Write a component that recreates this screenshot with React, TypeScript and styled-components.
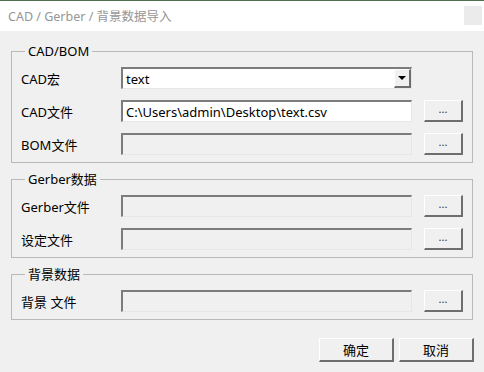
import * as React from 'react'
import styled, { createGlobalStyle } from 'styled-components'

const GlobalStyle = createGlobalStyle({
  'html, body': {
    margin: 0,
    padding: 0,
    background: '#f0f0f0'
  },
  body: {
    fontFamily: '"Noto Sans", "Noto Sans CJK SC", sans-serif',
    fontSize: '13px',
    color: '#000'
  }
})

const Window = styled.div({
  width: '484px',
  height: '372px',
  background: '#f0f0f0',
  borderTop: '1px solid #4f6f52',
  boxSizing: 'border-box',
  overflow: 'hidden'
})

const TitleBar = styled.div({
  height: '30px',
  background: '#ffffff',
  display: 'flex',
  alignItems: 'center',
  justifyContent: 'space-between',
  padding: '0 2px 0 8px'
})

const Title = styled.span({
  fontSize: '12.5px',
  color: '#969696',
  marginTop: '-2px'
})

const CloseBox = styled.div({
  width: '18px',
  height: '19px',
  background: '#ebebeb',
  marginTop: '-2px'
})

const Body = styled.div({
  padding: '12px 11px 0 11px',
  display: 'flex',
  flexDirection: 'column',
  gap: '8px'
})

const Group = styled.fieldset({
  margin: 0,
  padding: '8px 9px 7px 9px',
  border: '1px solid #b9b9b9',
  display: 'flex',
  flexDirection: 'column',
  gap: '11px',
  minWidth: 0
})

const Legend = styled.legend({
  padding: '0 3px',
  marginLeft: '4px',
  lineHeight: '16px',
  fontSize: '13px'
})

const Row = styled.div({
  display: 'flex',
  alignItems: 'center',
  height: '22px'
})

const Label = styled.span({
  width: '100px',
  flexShrink: 0
})

const Field = styled.div<{ $enabled?: boolean }>(({ $enabled }) => ({
  width: '291px',
  height: '22px',
  boxSizing: 'border-box',
  background: $enabled ? '#ffffff' : '#f0f0f0',
  borderTop: '2px solid #7c7c7c',
  borderLeft: '2px solid #7c7c7c',
  borderBottom: '1px solid #e6e6e6',
  borderRight: '1px solid #e6e6e6',
  display: 'flex',
  alignItems: 'center',
  padding: '0 3px',
  whiteSpace: 'nowrap',
  overflow: 'hidden'
}))

const Select = styled(Field)({
  padding: '0 0 0 3px',
  justifyContent: 'space-between'
})

const DropButton = styled.div({
  width: '17px',
  height: '19px',
  boxSizing: 'border-box',
  background: '#f0f0f0',
  borderTop: '1px solid #ffffff',
  borderLeft: '1px solid #ffffff',
  borderRight: '2px solid #6e6e6e',
  borderBottom: '2px solid #6e6e6e',
  display: 'flex',
  alignItems: 'center',
  justifyContent: 'center',
  alignSelf: 'flex-start'
})

const Arrow = styled.span({
  width: 0,
  height: 0,
  borderLeft: '4px solid transparent',
  borderRight: '4px solid transparent',
  borderTop: '4px solid #000'
})

const Browse = styled.button({
  marginLeft: '12px',
  width: '39px',
  height: '22px',
  boxSizing: 'border-box',
  background: '#f0f0f0',
  borderTop: '1px solid #ffffff',
  borderLeft: '1px solid #ffffff',
  borderRight: '2px solid #6e6e6e',
  borderBottom: '2px solid #6e6e6e',
  padding: '0 0 4px 0',
  fontFamily: 'inherit',
  fontSize: '11px',
  lineHeight: '10px',
  color: '#333'
})

const Footer = styled.div({
  display: 'flex',
  justifyContent: 'flex-end',
  gap: '5px',
  padding: '18px 10px 0 0'
})

const DialogButton = styled.button({
  width: '75px',
  height: '24px',
  boxSizing: 'border-box',
  background: '#f0f0f0',
  borderTop: '1px solid #ffffff',
  borderLeft: '1px solid #ffffff',
  borderRight: '2px solid #6e6e6e',
  borderBottom: '2px solid #6e6e6e',
  fontFamily: 'inherit',
  fontSize: '13px',
  color: '#000',
  padding: 0
})

interface FileRowProps {
  label: string
  value?: string
}

const FileRow = ({ label, value }: FileRowProps) => (
  <Row>
    <Label>{label}</Label>
    <Field $enabled={!!value}>{value}</Field>
    <Browse>...</Browse>
  </Row>
)

const App = () => {
  return (
    <Window>
      <GlobalStyle />
      <TitleBar>
        <Title>CAD / Gerber / 背景数据导入</Title>
        <CloseBox />
      </TitleBar>
      <Body>
        <Group>
          <Legend>CAD/BOM</Legend>
          <Row>
            <Label>CAD宏</Label>
            <Select $enabled>
              text
              <DropButton><Arrow /></DropButton>
            </Select>
          </Row>
          <FileRow label="CAD文件" value="C:\Users\admin\Desktop\text.csv" />
          <FileRow label="BOM文件" />
        </Group>
        <Group>
          <Legend>Gerber数据</Legend>
          <FileRow label="Gerber文件" />
          <FileRow label="设定文件" />
        </Group>
        <Group>
          <Legend>背景数据</Legend>
          <FileRow label="背景 文件" />
        </Group>
      </Body>
      <Footer>
        <DialogButton>确定</DialogButton>
        <DialogButton>取消</DialogButton>
      </Footer>
    </Window>
  )
}

export default App
